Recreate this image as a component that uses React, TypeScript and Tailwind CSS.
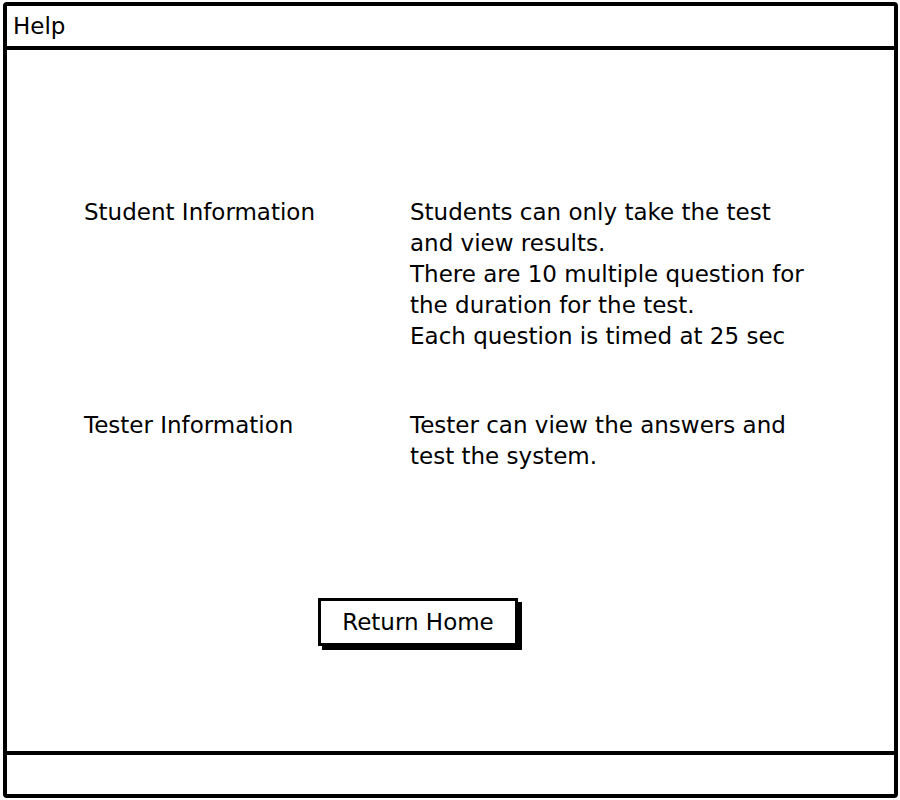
export default function App() {
  const font = { fontFamily: '"DejaVu Sans", "Liberation Sans", sans-serif' };
  return (
    <div className="w-[900px] h-[800px] bg-white relative overflow-hidden text-black" style={font}>
      <div className="absolute left-[3px] top-[2px] w-[895px] h-[796px] border-[4px] border-black rounded-[4px] flex flex-col">
        <div className="h-[44px] border-b-[4px] border-black flex items-center pl-[6px] text-[23px] leading-none">
          Help
        </div>
        <div className="flex-1 flex flex-col">
          <div className="pt-[147px] pl-[77px] text-[23px] leading-[31px]">
            <div className="flex">
              <div className="w-[326px]">Student Information</div>
              <div>
                <div>Students can only take the test</div>
                <div>and view results.</div>
                <div>There are 10 multiple question for</div>
                <div>the duration for the test.</div>
                <div>Each question is timed at 25 sec</div>
              </div>
            </div>
            <div className="flex mt-[58px]">
              <div className="w-[326px]">Tester Information</div>
              <div>
                <div>Tester can view the answers and</div>
                <div>test the system.</div>
              </div>
            </div>
          </div>
          <div className="mt-[126px] pl-[311px]">
            <div className="w-[200px] h-[48px] border-[3px] border-black bg-white shadow-[4px_4px_0_0_#000] flex items-center justify-center text-[23px] leading-none">
              Return Home
            </div>
          </div>
        </div>
        <div className="h-[43px] border-t-[4px] border-black"></div>
      </div>
    </div>
  );
}
